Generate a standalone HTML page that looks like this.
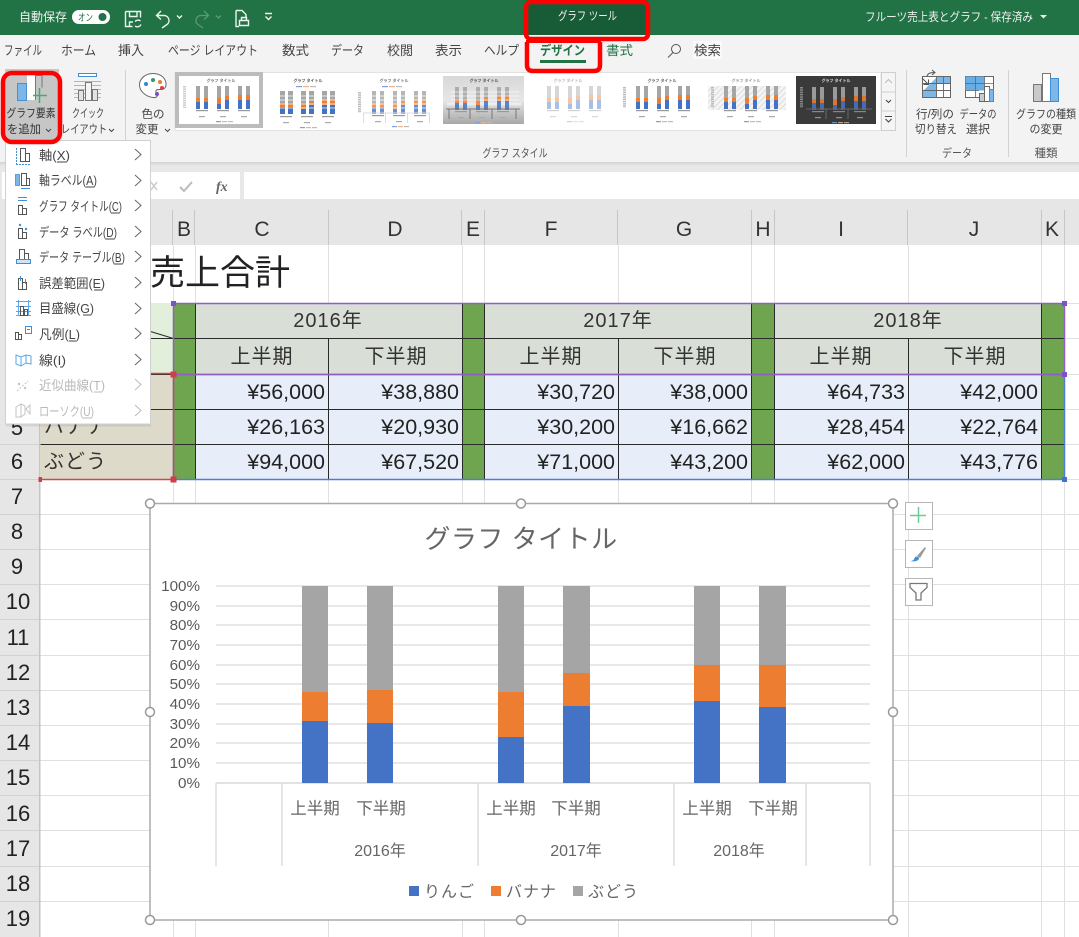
<!DOCTYPE html>
<html lang="ja"><head><meta charset="utf-8"><title>Excel</title>
<style>
html,body{margin:0;padding:0;background:#fff;width:1079px;height:937px;overflow:hidden}
svg{display:block}
text{font-family:"Liberation Sans","Noto Sans CJK JP",sans-serif}
.rb{font-size:11.5px;fill:#444;text-anchor:middle}
.tab{font-size:13px;fill:#444}
.m{font-size:13px;fill:#444}
.d{font-size:13px;fill:#b9b9b9}
.rh{font-size:22px;fill:#222;text-anchor:middle}
.ch{font-size:21px;fill:#333;text-anchor:middle}
.hd{font-size:20px;fill:#333;text-anchor:middle;letter-spacing:1px}
.v{font-size:21.5px;fill:#222;text-anchor:end}
.ax{font-size:16.5px;fill:#666;text-anchor:middle}
.yl{font-size:15.2px;fill:#595959;text-anchor:end}
.ic{fill:none;stroke:#555;stroke-width:1}
.t{font-size:4px;font-weight:700;fill:#777;text-anchor:middle}
</style></head><body>
<svg width="1079" height="937" viewBox="0 0 1079 937" xmlns="http://www.w3.org/2000/svg">
<defs>
<linearGradient id="sh" x1="0" y1="0" x2="0" y2="1"><stop offset="0" stop-color="#d2d2d2"/><stop offset="1" stop-color="#e8e8e8"/></linearGradient>
<linearGradient id="gg" x1="0" y1="0" x2="0" y2="1"><stop offset="0" stop-color="#d8d8d8"/><stop offset=".5" stop-color="#e6e6e6"/><stop offset="1" stop-color="#a8a8a8"/></linearGradient>
<pattern id="ht" width="4" height="4" patternUnits="userSpaceOnUse" patternTransform="rotate(45)"><rect width="4" height="4" fill="#f7f7f7"/><rect width="2" height="4" fill="#e6e6e6"/></pattern>
<g id="b">
<rect x="0" width="4" height="12" fill="#a5a5a5"/><rect x="0" y="12" width="4" height="4" fill="#ed7d31"/><rect x="0" y="16" width="4" height="7" fill="#4472c4"/>
<rect x="8" width="4" height="12" fill="#a5a5a5"/><rect x="8" y="12" width="4" height="4" fill="#ed7d31"/><rect x="8" y="16" width="4" height="7" fill="#4472c4"/>
<rect x="21" width="4" height="12" fill="#a5a5a5"/><rect x="21" y="12" width="4" height="6" fill="#ed7d31"/><rect x="21" y="18" width="4" height="5" fill="#4472c4"/>
<rect x="29" width="4" height="10" fill="#a5a5a5"/><rect x="29" y="10" width="4" height="4" fill="#ed7d31"/><rect x="29" y="14" width="4" height="9" fill="#4472c4"/>
<rect x="42" width="4" height="9" fill="#a5a5a5"/><rect x="42" y="9" width="4" height="5" fill="#ed7d31"/><rect x="42" y="14" width="4" height="9" fill="#4472c4"/>
<rect x="50" width="4" height="9" fill="#a5a5a5"/><rect x="50" y="9" width="4" height="5" fill="#ed7d31"/><rect x="50" y="14" width="4" height="9" fill="#4472c4"/>
</g>
<g id="l">
<rect x="0" y="0" width="12" height="1.200" fill="#999"/><rect x="21" y="0" width="12" height="1.200" fill="#999"/><rect x="42" y="0" width="12" height="1.200" fill="#999"/>
<rect x="3" y="6" width="6" height="1.200" fill="#aaa"/><rect x="24" y="6" width="6" height="1.200" fill="#aaa"/><rect x="45" y="6" width="6" height="1.200" fill="#aaa"/>
<rect x="20" y="11" width="5" height="1.200" fill="#79a3de"/><rect x="26" y="11" width="5" height="1.200" fill="#f2b285"/><rect x="32" y="11" width="5" height="1.200" fill="#bbb"/>
</g>
</defs>

<rect width="1079" height="937" fill="#fff"/>

<!-- title bar -->
<rect width="1079" height="35" fill="#217346"/>
<rect x="527" y="0" width="120" height="35" fill="#185c37"/>
<text x="19" y="21" font-size="12" fill="#f2f2f2">自動保存</text>
<rect x="72" y="10" width="38" height="14" rx="7" fill="#fff"/>
<text x="78" y="21" font-size="10" fill="#217346" textLength="15" lengthAdjust="spacingAndGlyphs">オン</text>
<circle cx="102.500" cy="17" r="4" fill="#217346"/>
<g fill="none" stroke="#eef3ef" stroke-width="1.400">
<path d="M125.500 11.500h15v6M125.500 11.500v15h7M129.500 11.500v5h7.500v-5M129.500 26v-4h3.500"/><path d="M135 21.500a4 4 0 0 1 5.500-.5M141 24.500a4 4 0 0 1-6 1.500"/>
<path d="M157 15.500h7a5 5 0 0 1 3 9l-5 3.500M161 11l-4.500 4.500 4.500 4"/><path d="M177 15.500l2.500 2.500 2.500-2.500"/>
<path d="M236 10.500h6l4 4v4M236 10.500v16h3"/><path d="M239.500 20.500h9v5h-9zM241.500 20.500v-3h5v3"/>
<path d="M265 13.500h7M265.500 16.500l3 3 3-3"/>
</g>
<g fill="none" stroke="#5f9678" stroke-width="1.300"><path d="M208 15.500h-7a5 5 0 0 0-3 9l5 3.500M204 11l4.500 4.500-4.500 4"/><path d="M216 15.500l2.500 2.500 2.500-2.500"/></g>
<text x="558" y="20" font-size="12" fill="#f2f2f2" textLength="59" lengthAdjust="spacingAndGlyphs">グラフ ツール</text>
<text x="865" y="21" font-size="12" fill="#eee" textLength="168" lengthAdjust="spacingAndGlyphs">フルーツ売上表とグラフ - 保存済み</text>
<path d="M1040 15h7l-3.500 3.500z" fill="#eee"/>

<!-- ribbon -->
<rect y="35" width="1079" height="127" fill="#f3f3f3"/>
<rect y="162" width="1079" height="4" fill="url(#sh)"/>
<rect y="166" width="1079" height="47" fill="#e8e8e8"/>
<text class="tab" x="4" y="55" textLength="38" lengthAdjust="spacingAndGlyphs">ファイル</text>
<text class="tab" x="61" y="55" textLength="35" lengthAdjust="spacingAndGlyphs">ホーム</text>
<text class="tab" x="118" y="55" textLength="26" lengthAdjust="spacingAndGlyphs">挿入</text>
<text class="tab" x="168" y="55" textLength="90" lengthAdjust="spacingAndGlyphs">ページ レイアウト</text>
<text class="tab" x="282" y="55" textLength="27" lengthAdjust="spacingAndGlyphs">数式</text>
<text class="tab" x="331" y="55" textLength="33" lengthAdjust="spacingAndGlyphs">データ</text>
<text class="tab" x="387" y="55" textLength="26" lengthAdjust="spacingAndGlyphs">校閲</text>
<text class="tab" x="435" y="55" textLength="27" lengthAdjust="spacingAndGlyphs">表示</text>
<text class="tab" x="484" y="55" textLength="35" lengthAdjust="spacingAndGlyphs">ヘルプ</text>
<text x="540" y="55" font-size="13" font-weight="700" fill="#217346" textLength="45" lengthAdjust="spacingAndGlyphs">デザイン</text>
<rect x="540" y="60" width="46" height="3" fill="#217346"/>
<text x="606" y="55" font-size="13" fill="#217346" textLength="27" lengthAdjust="spacingAndGlyphs">書式</text>
<circle cx="676" cy="49" r="4.500" fill="none" stroke="#555"/><path d="M673 52.500l-5 5" stroke="#555"/>
<rect x="693" y="41" width="29" height="18" fill="#fafafa"/>
<text class="tab" x="694" y="55" textLength="27" lengthAdjust="spacingAndGlyphs">検索</text>

<!-- add element button -->
<rect x="5" y="69" width="54" height="73" fill="#c6c6c6"/>
<rect x="17.500" y="83.500" width="9" height="17" fill="#7db7e8" stroke="#4a90d0"/>
<rect x="27" y="75" width="8" height="25" fill="#fff"/>
<path d="M35 75.500h7v12M35.500 75v25" fill="none" stroke="#777"/>
<path d="M39.500 88v15M33 95.500h14" stroke="#3fae6c" stroke-width="1.500"/>
<text class="rb" x="31" y="117" style="fill:#333" textLength="49" lengthAdjust="spacingAndGlyphs">グラフ要素</text>
<text class="rb" x="24" y="133" style="fill:#333" textLength="34" lengthAdjust="spacingAndGlyphs">を追加</text>
<path d="M46 129l2.500 2.500 2.500-2.500" fill="none" stroke="#444"/>

<!-- quick layout -->
<rect x="78.500" y="73.500" width="18" height="3" fill="#fff" stroke="#3f8fd8"/>
<g stroke="#8cc0ea"><path d="M74 81.500h27M74 85.500h27M74 89.500h27M74 93.500h27M74 97.500h27"/></g>
<rect x="78.500" y="90.500" width="5" height="10" fill="#e3e3e3" stroke="#777"/><rect x="85.500" y="82.500" width="6" height="18" fill="#f4f4f4" stroke="#777"/><rect x="92.500" y="89.500" width="5" height="11" fill="#e3e3e3" stroke="#777"/>
<text class="rb" x="88" y="117" textLength="32" lengthAdjust="spacingAndGlyphs">クイック</text>
<text class="rb" x="84" y="133" textLength="46" lengthAdjust="spacingAndGlyphs">レイアウト</text>
<path d="M109 129l2.500 2.500 2.500-2.500" fill="none" stroke="#444"/>
<rect x="125" y="70" width="1" height="87" fill="#d2d2d2"/>

<!-- palette -->
<path d="M153 73.500c9 0 13.500 6 13 11.500-.5 5-5 4.500-8 4.500-3 .5-2.500 3-1 5 1 2-1 3.500-4 3-8-1-13.500-7-13.500-12.500 0-6.500 6-11.500 13.500-11.500z" fill="#fff" stroke="#666"/>
<circle cx="146" cy="84" r="2" fill="#2e86d5"/><circle cx="153" cy="80" r="2" fill="#2f9e5b"/><circle cx="160" cy="82" r="2" fill="#ed7d31"/><circle cx="162" cy="88" r="2" fill="#d9413d"/><circle cx="157" cy="94" r="2" fill="#7a4fc0"/>
<text class="rb" x="153" y="118">色の</text>
<text class="rb" x="147" y="133">変更</text>
<path d="M165 129l2.500 2.500 2.500-2.500" fill="none" stroke="#444"/>

<!-- gallery -->
<rect x="175" y="72.500" width="706" height="58" fill="#fff" stroke="#e2e2e2"/>
<rect x="177" y="74" width="84" height="52" fill="#fff" stroke="#bcbcbc" stroke-width="4"/>
<text class="t" x="221" y="82">グラフ タイトル</text>
<path d="M184.500 86v22" stroke="#ccc" stroke-width="3" stroke-dasharray="1.500 .8"/>
<use href="#b" x="196" y="86"/><use href="#l" x="196" y="110"/>

<text class="t" x="308" y="82" style="fill:#555">グラフ タイトル</text>
<rect x="296" y="86" width="6" height="1.200" fill="#79a3de"/><rect x="303" y="86" width="6" height="1.200" fill="#f2b285"/><rect x="310" y="86" width="6" height="1.200" fill="#bbb"/>
<use href="#b" x="280" y="91"/><g transform="translate(1 0)"><use href="#b" x="280" y="91"/></g>
<path d="M276 96h62M276 100h62M276 104h62M276 108h62" stroke="#fff" stroke-width=".7"/>
<use href="#l" x="280" y="116"/>

<text class="t" x="394" y="82" style="fill:#777">グラフ タイトル</text>
<rect x="382" y="86" width="6" height="1.200" fill="#79a3de"/><rect x="389" y="86" width="6" height="1.200" fill="#f2b285"/><rect x="396" y="86" width="6" height="1.200" fill="#bbb"/>
<path d="M359.500 92v21" stroke="#bbb" stroke-width="3" stroke-dasharray="1.500 .8"/>
<g opacity=".8"><use href="#b" x="372" y="91"/></g>
<path d="M368 96h62M368 100h62M368 104h62M368 108h62" stroke="#fff" stroke-width=".7"/>
<path d="M363.500 113v10M366 113v0M385.500 113v10M407.500 113v10M429.500 113v10M363 113h67" stroke="#ddd" fill="none"/>
<use href="#l" x="372" y="115"/>

<rect x="443" y="76" width="81" height="48" fill="url(#gg)"/>
<text class="t" x="484" y="82" style="fill:#555">グラフ タイトル</text>
<path d="M447 104h74" stroke="#fff" stroke-width="3" opacity=".5"/>
<use href="#b" x="455" y="87" opacity=".85"/>
<path d="M451 92h68M451 96h68M451 100h68" stroke="#fff" stroke-width=".7" opacity=".8"/>
<path d="M446 109h74M449 109v10M470 109v10M492 109v10M516 109v10" stroke="#777" fill="none"/>
<use href="#l" x="455" y="111"/>

<text class="t" x="568" y="82" style="fill:#bbb">グラフ タイトル</text>
<g opacity=".45"><use href="#b" x="547" y="86"/><use href="#l" x="547" y="110"/></g>

<text class="t" x="662" y="82" style="fill:#666">グラフ タイトル</text>
<path d="M624.500 87v21" stroke="#bbb" stroke-width="3" stroke-dasharray="1.500 .8"/>
<use href="#b" x="636" y="86"/><use href="#l" x="636" y="110"/>

<rect x="708" y="86" width="78" height="24" fill="url(#ht)"/>
<text class="t" x="746" y="82" style="fill:#999">グラフ タイトル</text>
<path d="M712.500 87v21" stroke="#bbb" stroke-width="3" stroke-dasharray="1.500 .8"/>
<use href="#b" x="724" y="86"/><use href="#l" x="724" y="110"/>

<rect x="796" y="76" width="80" height="48" fill="#3a3a3a"/>
<text class="t" x="836" y="82" style="fill:#ddd">グラフ タイトル</text>
<path d="M801.500 87v21" stroke="#888" stroke-width="3" stroke-dasharray="1.500 .8"/>
<use href="#b" x="812" y="87" opacity=".9"/>
<path d="M806 109h66M826 109v10M848 109v10" stroke="#666" fill="none"/>
<use href="#l" x="812" y="111" opacity=".8"/>

<rect x="881.500" y="72.500" width="14" height="58" fill="#f5f5f5" stroke="#cfcfcf"/>
<path d="M881 92h15M881 111h15" stroke="#cfcfcf"/>
<path d="M885 83l3.500-3.500 3.500 3.500" fill="none" stroke="#bbb"/>
<path d="M886 100l2.500 2.500 2.500-2.500" fill="none" stroke="#444"/>
<path d="M885 116.500h7M885.500 119l3 3 3-3" fill="none" stroke="#444"/>
<text class="rb" x="515" y="157" style="fill:#555" textLength="65" lengthAdjust="spacingAndGlyphs">グラフ スタイル</text>

<rect x="906" y="70" width="1" height="87" fill="#d2d2d2"/>
<!-- switch -->
<rect x="922.500" y="76.500" width="28" height="21" fill="#fff" stroke="#666"/>
<path d="M923 97v-6l14-14h13v6h-13v14z" fill="#7db7e8"/>
<path d="M922.500 83.500h28M922.500 90.500h28M936.500 77v20M943.500 77v20" stroke="#666" stroke-width=".9"/>
<path d="M922 78l6 6M928.500 79.500v5h-5M927 76c1-3 4-3.500 8-3.500M932 70l3 2.500-3 2.500" fill="none" stroke="#555"/>
<!-- data select -->
<rect x="965.500" y="76.500" width="28" height="21" fill="#fff" stroke="#666"/>
<rect x="965.500" y="76.500" width="19" height="14" fill="#67aee6"/>
<path d="M965 83.500h28M975.500 76v21M984.500 76v21M965 90.500h14" stroke="#666" stroke-width=".8"/>
<rect x="979.500" y="93.500" width="5" height="8" fill="#ccc" stroke="#666"/><rect x="984.500" y="86.500" width="5" height="15" fill="#fff" stroke="#666"/><rect x="989.500" y="89.500" width="4" height="12" fill="#7db7e8" stroke="#3f8fd8"/>
<text class="rb" x="935" y="118" textLength="38" lengthAdjust="spacingAndGlyphs">行/列の</text><text class="rb" x="936" y="133" textLength="42" lengthAdjust="spacingAndGlyphs">切り替え</text>
<text class="rb" x="978" y="118" textLength="37" lengthAdjust="spacingAndGlyphs">データの</text><text class="rb" x="978" y="133" textLength="24" lengthAdjust="spacingAndGlyphs">選択</text>
<text class="rb" x="957" y="157" style="fill:#555" textLength="30" lengthAdjust="spacingAndGlyphs">データ</text>
<rect x="1008" y="70" width="1" height="87" fill="#d2d2d2"/>
<!-- change type -->
<rect x="1033.500" y="84.500" width="8" height="17" fill="#c9c9c9" stroke="#777"/><rect x="1042.500" y="73.500" width="8" height="28" fill="#fff" stroke="#777"/><rect x="1050.500" y="78.500" width="8" height="23" fill="#7db7e8" stroke="#3f8fd8"/>
<text class="rb" x="1046" y="118" textLength="60" lengthAdjust="spacingAndGlyphs">グラフの種類</text><text class="rb" x="1046" y="133" textLength="33" lengthAdjust="spacingAndGlyphs">の変更</text>
<text class="rb" x="1046" y="157" style="fill:#555">種類</text>

<!-- formula bar -->
<rect x="2" y="172" width="238" height="27" fill="#fff"/>
<rect x="244" y="172" width="835" height="27" fill="#fff"/>
<path d="M151 182l6 8M157 182l-6 8" stroke="#ccc" stroke-width="1.500"/>
<path d="M180 187l4 4 8-9" fill="none" stroke="#bbb" stroke-width="2"/>
<text x="216" y="191" font-size="14" font-style="italic" font-weight="700" fill="#666" style='font-family:"Liberation Serif",serif'>fx</text>

<!-- column header -->
<rect y="199" width="1079" height="46" fill="#e6e6e6"/>
<g fill="#c6c6c6">
<rect x="172" y="210" width="1" height="35"/><rect x="194" y="210" width="1" height="35"/><rect x="328" y="210" width="1" height="35"/><rect x="461" y="210" width="1" height="35"/><rect x="484" y="210" width="1" height="35"/><rect x="617" y="210" width="1" height="35"/><rect x="751" y="210" width="1" height="35"/><rect x="774" y="210" width="1" height="35"/><rect x="907" y="210" width="1" height="35"/><rect x="1041" y="210" width="1" height="35"/><rect x="1064" y="210" width="1" height="35"/>
</g>
<text class="ch" x="184" y="236">B</text><text class="ch" x="262" y="236">C</text><text class="ch" x="395" y="236">D</text><text class="ch" x="473" y="236">E</text><text class="ch" x="551" y="236">F</text><text class="ch" x="684" y="236">G</text><text class="ch" x="763" y="236">H</text><text class="ch" x="841" y="236">I</text><text class="ch" x="974" y="236">J</text><text class="ch" x="1052" y="236">K</text>

<!-- row header -->
<rect y="245" width="39" height="692" fill="#e6e6e6"/>
<rect x="39" y="245" width="1.500" height="692" fill="#c4c4c4"/>
<g fill="#d2d2d2">
<rect y="444" width="39" height="1"/><rect y="479" width="39" height="1"/><rect y="514" width="39" height="1"/><rect y="549" width="39" height="1"/><rect y="584" width="39" height="1"/><rect y="619" width="39" height="1"/><rect y="655" width="39" height="1"/><rect y="690" width="39" height="1"/><rect y="725" width="39" height="1"/><rect y="760" width="39" height="1"/><rect y="795" width="39" height="1"/><rect y="830" width="39" height="1"/><rect y="866" width="39" height="1"/><rect y="901" width="39" height="1"/>
</g>
<text class="rh" x="17" y="435">5</text><text class="rh" x="17" y="469">6</text><text class="rh" x="17" y="504">7</text><text class="rh" x="17" y="539">8</text><text class="rh" x="17" y="574">9</text><text class="rh" x="18" y="609">10</text><text class="rh" x="18" y="645">11</text><text class="rh" x="18" y="680">12</text><text class="rh" x="18" y="715">13</text><text class="rh" x="18" y="750">14</text><text class="rh" x="18" y="785">15</text><text class="rh" x="18" y="821">16</text><text class="rh" x="18" y="856">17</text><text class="rh" x="18" y="891">18</text><text class="rh" x="18" y="926">19</text>

<!-- gridlines -->
<g stroke="#e0e0e0" stroke-width="1" transform="translate(.5 .5)">
<path d="M40 514H1079M40 549H1079M40 584H1079M40 619H1079M40 655H1079M40 690H1079M40 725H1079M40 760H1079M40 795H1079M40 830H1079M40 866H1079M40 901H1079M1064 479H1079M1064 338H1079M1064 374H1079M1064 409H1079M1064 444H1079M1064 303H1079M40 303H173"/>
<path d="M173 245V937M195 245V937M328 245V303M462 245V303M484 245V303M618 245V303M751 245V303M774 245V303M908 245V937M1041 245V937M1064 245V937M328 479V937M462 479V937M484 479V937M618 479V937M751 479V937M774 479V937"/>
</g>

<text x="150" y="285" font-size="35" fill="#222">売上合計</text>

<!-- table fills -->
<rect x="40" y="303" width="133" height="71" fill="#e2efda"/>
<rect x="40" y="374" width="133" height="105" fill="#dedaca"/>
<rect x="173" y="303" width="22" height="176" fill="#70a550"/>
<rect x="195" y="303" width="267" height="71" fill="#d9dfd7"/>
<rect x="462" y="303" width="22" height="176" fill="#70a550"/>
<rect x="484" y="303" width="267" height="71" fill="#d9dfd7"/>
<rect x="751" y="303" width="23" height="176" fill="#70a550"/>
<rect x="774" y="303" width="267" height="71" fill="#d9dfd7"/>
<rect x="1041" y="303" width="23" height="176" fill="#70a550"/>
<rect x="195" y="374" width="267" height="105" fill="#e7eef9"/>
<rect x="484" y="374" width="267" height="105" fill="#e7eef9"/>
<rect x="774" y="374" width="267" height="105" fill="#e7eef9"/>

<!-- table lines -->
<g stroke="#2a2a2a" stroke-width="1" transform="translate(.5 .5)">
<path d="M40 338H1064M40 374H1064M40 409H1064M40 444H1064"/>
<path d="M195 303V479M328 338V479M462 303V479M484 303V479M618 338V479M751 303V479M774 303V479M908 338V479M1041 303V479"/>
<path d="M150 331L173 338"/>
</g>

<!-- table text -->
<text class="hd" x="328" y="327">2016年</text><text class="hd" x="618" y="327">2017年</text><text class="hd" x="908" y="327">2018年</text>
<text class="hd" x="262" y="363">上半期</text><text class="hd" x="396" y="363">下半期</text><text class="hd" x="551" y="363">上半期</text><text class="hd" x="685" y="363">下半期</text><text class="hd" x="841" y="363">上半期</text><text class="hd" x="975" y="363">下半期</text>
<text x="44" y="433" font-size="20" fill="#333" letter-spacing="1">バナナ</text>
<text x="44" y="468" font-size="20" fill="#333" letter-spacing="1">ぶどう</text>
<text class="v" x="325" y="399">¥56,000</text><text class="v" x="459" y="399">¥38,880</text><text class="v" x="615" y="399">¥30,720</text><text class="v" x="748" y="399">¥38,000</text><text class="v" x="905" y="399">¥64,733</text><text class="v" x="1038" y="399">¥42,000</text>
<text class="v" x="325" y="434">¥26,163</text><text class="v" x="459" y="434">¥20,930</text><text class="v" x="615" y="434">¥30,200</text><text class="v" x="748" y="434">¥16,662</text><text class="v" x="905" y="434">¥28,454</text><text class="v" x="1038" y="434">¥22,764</text>
<text class="v" x="325" y="469">¥94,000</text><text class="v" x="459" y="469">¥67,520</text><text class="v" x="615" y="469">¥71,000</text><text class="v" x="748" y="469">¥43,200</text><text class="v" x="905" y="469">¥62,000</text><text class="v" x="1038" y="469">¥43,776</text>

<!-- selection -->
<rect x="173.500" y="374.500" width="891" height="105" fill="none" stroke="#4c7fd0" stroke-width="1.500"/>
<rect x="173.500" y="303.500" width="891" height="71" fill="none" stroke="#8f5fc4" stroke-width="1.500"/>
<path d="M40 373.500H173.500V479.500H40" fill="none" stroke="#d2474e" stroke-width="1.500"/>
<g fill="#7c52c9"><rect x="171" y="301" width="5" height="5"/><rect x="1062" y="301" width="5" height="5"/><rect x="1062" y="372" width="5" height="5"/></g>
<rect x="1062" y="477" width="5" height="5" fill="#4472c4"/>
<g fill="#cf3f48"><rect x="170.500" y="371.500" width="6" height="6"/><rect x="170.500" y="476.500" width="6" height="6"/><rect x="38.500" y="477" width="3.500" height="5"/></g>

<!-- chart -->
<rect x="150" y="503.500" width="743" height="416.500" fill="#fff" stroke="#aaa" stroke-width="1.500"/>
<text x="521" y="548" font-size="26" fill="#666" text-anchor="middle" letter-spacing=".5">グラフ タイトル</text>
<g stroke="#d9d9d9" stroke-width="1.300">
<path d="M216 586H870M216 606H870M216 625H870M216 645H870M216 665H870M216 684H870M216 704H870M216 724H870M216 743H870M216 763H870"/>
<path d="M216 783H870" stroke-width="1.600"/>
<path d="M216 783V866M282 783V866M478 783V866M674 783V866M806 783V866M870 783V866"/>
</g>
<text class="yl" x="200" y="591">100%</text><text class="yl" x="200" y="611">90%</text><text class="yl" x="200" y="630">80%</text><text class="yl" x="200" y="650">70%</text><text class="yl" x="200" y="670">60%</text><text class="yl" x="200" y="689">50%</text><text class="yl" x="200" y="709">40%</text><text class="yl" x="200" y="729">30%</text><text class="yl" x="200" y="748">20%</text><text class="yl" x="200" y="768">10%</text><text class="yl" x="200" y="788">0%</text>
<g fill="#a5a5a5"><rect x="302" y="586" width="26" height="106"/><rect x="367" y="586" width="26" height="104"/><rect x="498" y="586" width="26" height="106"/><rect x="563" y="586" width="27" height="87"/><rect x="694" y="586" width="26" height="79"/><rect x="759" y="586" width="27" height="79"/></g>
<g fill="#ed7d31"><rect x="302" y="692" width="26" height="29"/><rect x="367" y="690" width="26" height="33"/><rect x="498" y="692" width="26" height="45"/><rect x="563" y="673" width="27" height="33"/><rect x="694" y="665" width="26" height="36"/><rect x="759" y="665" width="27" height="42"/></g>
<g fill="#4472c4"><rect x="302" y="721" width="26" height="62"/><rect x="367" y="723" width="26" height="60"/><rect x="498" y="737" width="26" height="46"/><rect x="563" y="706" width="27" height="77"/><rect x="694" y="701" width="26" height="82"/><rect x="759" y="707" width="27" height="76"/></g>
<text class="ax" x="315" y="814">上半期</text><text class="ax" x="381" y="814">下半期</text><text class="ax" x="511" y="814">上半期</text><text class="ax" x="576" y="814">下半期</text><text class="ax" x="707" y="814">上半期</text><text class="ax" x="773" y="814">下半期</text>
<text class="ax" x="380" y="856" style="font-size:16px">2016年</text><text class="ax" x="576" y="856" style="font-size:16px">2017年</text><text class="ax" x="739" y="856" style="font-size:16px">2018年</text>
<rect x="409" y="886" width="10" height="10" fill="#4472c4"/><text x="424" y="897" font-size="16" fill="#666" letter-spacing="1">りんご</text>
<rect x="491" y="886" width="10" height="10" fill="#ed7d31"/><text x="506" y="897" font-size="16" fill="#666" letter-spacing="1">バナナ</text>
<rect x="573" y="886" width="10" height="10" fill="#a5a5a5"/><text x="588" y="897" font-size="16" fill="#666" letter-spacing="1">ぶどう</text>
<g fill="#fff" stroke="#999" stroke-width="1.500">
<circle cx="150" cy="503.500" r="4.500"/><circle cx="521" cy="503.500" r="4.500"/><circle cx="893" cy="503.500" r="4.500"/>
<circle cx="150" cy="712" r="4.500"/><circle cx="893" cy="712" r="4.500"/>
<circle cx="150" cy="920" r="4.500"/><circle cx="521" cy="920" r="4.500"/><circle cx="893" cy="920" r="4.500"/>
</g>

<!-- chart side buttons -->
<g fill="#fff" stroke="#b5b5b5"><rect x="905.500" y="502.500" width="27" height="27"/><rect x="905.500" y="540.500" width="27" height="27"/><rect x="905.500" y="578.500" width="27" height="27"/></g>
<path d="M918.500 507v16M910 515.500h16" stroke="#6ccb92" stroke-width="1.500"/>
<path d="M917 556l8-9 1 1-6 10z" fill="#999"/><path d="M910 561c3 0 4-1 5-4 2-1 4 0 4 2-1 2-5 3-9 2z" fill="#3f8fd8"/>
<path d="M910 583.500h17v4l-6 5.500v7h-5v-7l-6-5.500z" fill="#fff" stroke="#777" stroke-width="1.300"/>

<!-- dropdown menu -->
<rect x="5.500" y="140.500" width="145" height="283.500" fill="#fff" stroke="#d0d0d0"/>
<rect x="6" y="424.500" width="145" height="2" fill="#000" opacity=".08"/>
<path d="M16.500 148v17M16 164.500h15" stroke="#3f8fd8" stroke-dasharray="2 1" fill="none"/><g class="ic"><rect x="20.500" y="148.500" width="5" height="13"/><rect x="25.500" y="153.500" width="4" height="8"/></g>
<rect x="15.500" y="174.500" width="4" height="11" fill="#7db7e8" stroke="#3f8fd8" stroke-width=".8"/><g class="ic"><rect x="21.500" y="173.500" width="5" height="12"/><rect x="26.500" y="178.500" width="3" height="7"/></g><path d="M21 188.500h9" stroke="#3f8fd8"/>
<path d="M18 197.500h9M18 200.500h9" stroke="#3f8fd8"/><g class="ic"><rect x="18.500" y="205.500" width="4" height="9"/><rect x="22.500" y="208.500" width="4" height="6"/></g>
<circle cx="20" cy="225" r="1.200" fill="#3f8fd8"/><circle cx="26" cy="229" r="1.200" fill="#3f8fd8"/><g class="ic"><rect x="18.500" y="228.500" width="4" height="10"/><rect x="22.500" y="232.500" width="4" height="6"/></g>
<g class="ic"><rect x="19.500" y="249.500" width="5" height="10"/><rect x="24.500" y="253.500" width="4" height="6"/></g><rect x="16.500" y="259.500" width="14" height="4" fill="#cfe4f7" stroke="#3f8fd8"/>
<g class="ic"><rect x="18.500" y="278.500" width="4" height="11"/><rect x="22.500" y="282.500" width="4" height="7"/></g><path d="M20.500 276v5M25.500 279v5" stroke="#3f8fd8"/>
<path d="M16 301.500H31M16 306.500H31M16 311.500H31M16 315.500H31M18.500 300v16M28.500 300v16" stroke="#5ea6e6" fill="none"/><g class="ic"><rect x="20.500" y="306.500" width="3" height="9"/><rect x="24.500" y="309.500" width="3" height="6"/></g>
<g class="ic"><rect x="15.500" y="332.500" width="3" height="7"/><rect x="18.500" y="334.500" width="3" height="5"/></g><rect x="25.500" y="326.500" width="6" height="7" fill="#fff" stroke="#3f8fd8"/><path d="M27 329.500h3" stroke="#3f8fd8"/>
<path d="M16 355l5 2 5-2 5 1v8l-5-1-5 3-5-2z" fill="none" stroke="#5ea6e6"/><path d="M21 357v9M26 355v8" stroke="#5ea6e6"/>
<path d="M17 391l11-10" stroke="#c4c4c4" stroke-dasharray="2 1.500"/><circle cx="19" cy="384" r="1.200" fill="#c4c4c4"/><circle cx="25" cy="388" r="1.200" fill="#c4c4c4"/>
<path d="M16 407l5-3v13h-5zM21 404l4 2v8l-4 3M26 409l4-4v9z" fill="none" stroke="#c4c4c4"/>
<text class="m" x="39" y="160" textLength="31" lengthAdjust="spacingAndGlyphs">軸(X)</text>
<text class="m" x="39" y="185" textLength="58" lengthAdjust="spacingAndGlyphs">軸ラベル(A)</text>
<text class="m" x="39" y="211" textLength="83" lengthAdjust="spacingAndGlyphs">グラフ タイトル(C)</text>
<text class="m" x="39" y="237" textLength="78" lengthAdjust="spacingAndGlyphs">データ ラベル(D)</text>
<text class="m" x="39" y="262" textLength="86" lengthAdjust="spacingAndGlyphs">データ テーブル(B)</text>
<text class="m" x="39" y="288" textLength="66" lengthAdjust="spacingAndGlyphs">誤差範囲(E)</text>
<text class="m" x="39" y="313" textLength="55" lengthAdjust="spacingAndGlyphs">目盛線(G)</text>
<text class="m" x="39" y="339" textLength="41" lengthAdjust="spacingAndGlyphs">凡例(L)</text>
<text class="m" x="39" y="365" textLength="27" lengthAdjust="spacingAndGlyphs">線(I)</text>
<text class="d" x="39" y="390" textLength="66" lengthAdjust="spacingAndGlyphs">近似曲線(T)</text>
<text class="d" x="39" y="416" textLength="55" lengthAdjust="spacingAndGlyphs">ローソク(U)</text>
<path d="M57 162h9M86 187h8M111 213h8M106 239h8M114 264h8M94 290h8M83 315h8M69 341h7M60 367h3" stroke="#444"/>
<path d="M94 392h8M83 418h8" stroke="#b9b9b9"/>
<g fill="none" stroke="#666" stroke-width="1">
<path d="M135 149l6 5.500-6 5.500M135 175l6 5.500-6 5.500M135 200l6 5.500-6 5.500M135 226l6 5.500-6 5.500M135 251l6 5.500-6 5.500M135 277l6 5.500-6 5.500M135 303l6 5.500-6 5.500M135 328l6 5.500-6 5.500M135 354l6 5.500-6 5.500"/>
<path d="M135 379l6 5.500-6 5.500M135 405l6 5.500-6 5.500" stroke="#bbb"/>
</g>

<!-- red annotations -->
<g fill="none" stroke="#ff0000" stroke-width="4.500">
<rect x="3" y="73" width="57" height="69" rx="9"/>
<rect x="526" y="2" width="122" height="37" rx="5"/>
<path d="M527 42V65q0 6 6 6H594q6 0 6-6V42"/>
</g>
<path d="M526 41.500H601" stroke="#ff0000" stroke-width="3"/>
</svg>
</body></html>
